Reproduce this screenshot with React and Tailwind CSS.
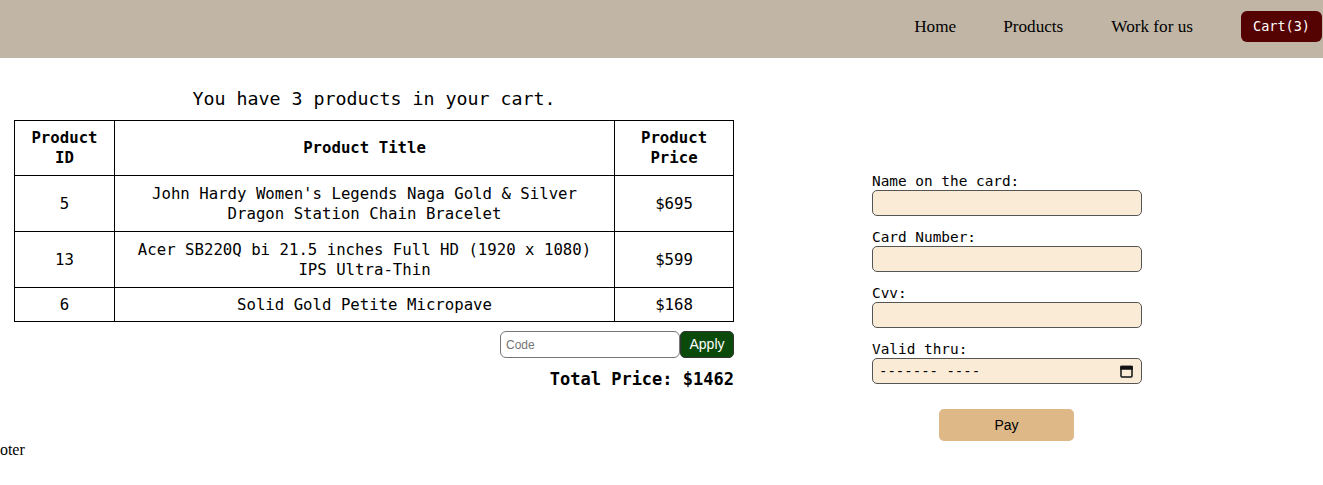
import React from "react";

const products = [
  { id: 5, title: "John Hardy Women's Legends Naga Gold & Silver Dragon Station Chain Bracelet", price: 695, h: "h-[56px]" },
  { id: 13, title: "Acer SB220Q bi 21.5 inches Full HD (1920 x 1080) IPS Ultra-Thin", price: 599, h: "h-[56px]" },
  { id: 6, title: "Solid Gold Petite Micropave", price: 168, h: "h-[34px]" },
];

const mono = "font-['DejaVu_Sans_Mono',monospace]";

const Field = ({ label }) => (
  <div className="flex flex-col mb-[12px]">
    <label className={`${mono} text-[14.4px] leading-[18px] text-black`}>{label}</label>
    <input
      type="text"
      className={`w-[270px] h-[26px] bg-[#faebd7] border border-[#555] rounded-[5px] px-2 text-[13px] ${mono}`}
    />
  </div>
);

const App = () => {
  const total = products.reduce((s, p) => s + p.price, 0);
  return (
    <div className="min-h-[485px] bg-white">
      <nav className="h-[58px] bg-[#c1b6a6] flex items-center justify-end pr-[1px] pb-[5px] font-['Liberation_Serif',serif] text-[17.2px] text-black">
        <a className="mr-[47px]">Home</a>
        <a className="mr-[48px]">Products</a>
        <a className="mr-[48px]">Work for us</a>
        <button className={`${mono} text-[13.5px] text-white bg-[#550202] rounded-[6px] w-[81px] h-[31px]`}>
          Cart(3)
        </button>
      </nav>

      <div className="flex">
        <div className="w-[748px] pl-[14px] pt-[30px] flex flex-col">
          <h2 className={`${mono} text-[18.3px] leading-[22px] text-center w-[720px] mb-[10px]`}>
            You have 3 products in your cart.
          </h2>
          <table className={`${mono} w-[720px] border-collapse text-[15.7px] leading-[20px] text-black`}>
            <thead>
              <tr className="h-[55px]">
                <th className="w-[100px] border border-black px-[6px] py-[6px] font-bold">Product ID</th>
                <th className="w-[501px] border border-black px-[6px] py-[6px] font-bold">Product Title</th>
                <th className="w-[119px] border border-black px-[6px] py-[6px] font-bold">Product Price</th>
              </tr>
            </thead>
            <tbody>
              {products.map((p) => (
                <tr key={p.id} className={p.h}>
                  <td className="border border-black text-center px-[6px] py-[6px]">{p.id}</td>
                  <td className="border border-black text-center px-[6px] py-[6px]">{p.title}</td>
                  <td className="border border-black text-center px-[6px] py-[6px]">${p.price}</td>
                </tr>
              ))}
            </tbody>
          </table>
          <div className="w-[720px] flex justify-end mt-[9px]">
            <input
              placeholder="Code"
              className="w-[180px] h-[27px] border border-[#767676] rounded-[6px] px-[5px] text-[12px] font-['Liberation_Sans',sans-serif] placeholder:text-[#757575]"
            />
            <button className="w-[54px] h-[27px] bg-[#0b4a0b] text-white rounded-[5px] text-[14px] font-['Liberation_Sans',sans-serif] border border-[#333]">
              Apply
            </button>
          </div>
          <div className={`${mono} w-[720px] text-right font-bold text-[17px] leading-[22px] mt-[10px]`}>
            Total Price: ${total}
          </div>
          <div className="mt-[50px] ml-[-31px] font-['Liberation_Serif',serif] text-[16px] leading-[20px]">
            Footer
          </div>
        </div>

        <div className="pl-[124px] pt-[114px] flex flex-col">
          <Field label="Name on the card:" />
          <Field label="Card Number:" />
          <Field label="Cvv:" />
          <div className="flex flex-col mb-[12px]">
            <label className={`${mono} text-[14.4px] leading-[18px] text-black`}>Valid thru:</label>
            <div className="w-[270px] h-[26px] bg-[#faebd7] border border-[#555] rounded-[5px] pl-[6px] pr-[8px] flex items-center justify-between">
              <span className={`${mono} text-[14px] text-black`}>------- ----</span>
              <svg width="13" height="13" viewBox="0 0 13 13" fill="none" stroke="#111" strokeWidth="1.5">
                <rect x="1" y="1.5" width="11" height="10.5" rx="1" />
                <rect x="1" y="1.5" width="11" height="2.5" fill="#111" />
              </svg>
            </div>
          </div>
          <button className="ml-[67px] mt-[13px] w-[135px] h-[32px] bg-[#deb887] rounded-[5px] text-[14px] font-['Liberation_Sans',sans-serif] text-black">
            Pay
          </button>
        </div>
      </div>
    </div>
  );
};

export default App;
